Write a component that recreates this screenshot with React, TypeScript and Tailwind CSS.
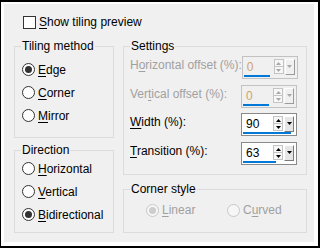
import { clsx as cn } from "clsx";

function Mn({ t, i }: { t: string; i: number }) {
  return (
    <>
      {t.slice(0, i)}
      <span className="underline decoration-1 underline-offset-[2px]">{t[i]}</span>
      {t.slice(i + 1)}
    </>
  );
}

function Radio({
  label,
  k,
  checked,
  disabled,
}: {
  label: string;
  k: number;
  checked?: boolean;
  disabled?: boolean;
}) {
  return (
    <div className="flex h-[23px] items-center gap-[3px]">
      <span
        className={cn(
          "flex size-[13px] shrink-0 items-center justify-center rounded-full border",
          disabled ? "border-[#c8c8c8] bg-[#f6f6f6]" : "border-[#333333] bg-white",
        )}
      >
        {checked && (
          <span
            className={cn(
              "size-[7px] rounded-full",
              disabled ? "bg-[#cdcdcd]" : "bg-[#333333]",
            )}
          />
        )}
      </span>
      <span className={disabled ? "text-[#a0a0a0]" : "text-black"}>
        <Mn t={label} i={k} />
      </span>
    </div>
  );
}

function Group({
  title,
  className,
  children,
}: {
  title: string;
  className?: string;
  children?: React.ReactNode;
}) {
  return (
    <div className={cn("relative border border-[#dcdcdc]", className)}>
      <span className="absolute -top-[9px] left-[6px] bg-[#f0f0f0] px-[1px] leading-[16px] text-black">
        {title}
      </span>
      {children}
    </div>
  );
}

function Tri({ up, color }: { up?: boolean; color: string }) {
  return (
    <svg width="5" height="3" viewBox="0 0 5 3">
      <path d={up ? "M0 3 L2.5 0 L5 3 Z" : "M0 0 L5 0 L2.5 3 Z"} fill={color} />
    </svg>
  );
}

function Spin({
  value,
  bar,
  disabled,
}: {
  value: string;
  bar: number;
  disabled?: boolean;
}) {
  const arrow = disabled ? "#a8a8a8" : "#000000";
  return (
    <div
      className={cn(
        "flex h-[23px] w-[56px] shrink-0 flex-col border pb-[1px] pl-[1px] pr-[2px] pt-[2px]",
        disabled ? "border-[#c2c2c2] bg-[#f0f0f0]" : "border-[#8a8a8a] bg-white",
      )}
    >
      <div className="flex h-[16px] gap-[1px]">
        <span
          className={cn(
            "flex-1 pl-[3px] pt-[1px] text-[12px] leading-[14px]",
            disabled ? "text-[#cfa467]" : "text-black",
          )}
        >
          {value}
        </span>
        <div className="flex h-[15px] w-[10px] flex-col">
          <div className="flex flex-1 items-center justify-center border border-[#c4c4c4] bg-[#f7f7f7]">
            <Tri up color={arrow} />
          </div>
          <div className="flex flex-1 items-center justify-center border border-t-0 border-[#c4c4c4] bg-[#f7f7f7]">
            <Tri color={arrow} />
          </div>
        </div>
        <div
          className={cn(
            "flex w-[10px] justify-center border border-l-white border-t-white pt-[5px]",
            disabled
              ? "border-b-[#9a9a9a] border-r-[#9a9a9a] bg-[#f0f0f0]"
              : "border-b-[#7a7a7a] border-r-[#7a7a7a] bg-[#e6e6e6]",
          )}
        >
          <Tri color={arrow} />
        </div>
      </div>
      <div className="h-[2px] bg-[#0078d7]" style={{ width: bar }} />
    </div>
  );
}

function Row({
  label,
  k,
  value,
  bar,
  disabled,
  className,
}: {
  label: string;
  k: number;
  value: string;
  bar: number;
  disabled?: boolean;
  className?: string;
}) {
  return (
    <div className={cn("flex h-[23px] items-start", className)}>
      <span
        className={cn(
          "flex-1 whitespace-nowrap pt-[1px] leading-[16px]",
          disabled ? "text-[#a0a0a0]" : "text-black",
        )}
      >
        <Mn t={label} i={k} />
      </span>
      <Spin value={value} bar={bar} disabled={disabled} />
    </div>
  );
}

export default function App() {
  return (
    <div className="h-[248px] w-[320px] border-b-2 border-l border-r-2 border-t-2 border-black bg-white pb-[4px] pl-[3px] pr-[4px] pt-[2px] font-['Liberation_Sans',Arial,sans-serif] text-[12px] leading-[16px] text-black">
      <div className="h-[238px] w-[310px] bg-[#f0f0f0]">
        <label className="ml-[19px] box-content flex h-[16px] items-center gap-[3px] pt-[10px]">
          <span className="size-[13px] border border-[#333333] bg-white" />
          <span>
            <Mn t="Show tiling preview" i={0} />
          </span>
        </label>

        <div className="ml-[10px] mt-[16px] flex gap-[9px]">
          <div className="flex w-[100px] flex-col">
            <Group title="Tiling method" className="h-[92px] pl-[7px] pt-[11px]">
              <Radio label="Edge" k={0} checked />
              <Radio label="Corner" k={0} />
              <Radio label="Mirror" k={0} />
            </Group>
            <Group title="Direction" className="mt-[12px] h-[83px] pl-[7px] pt-[6px]">
              <Radio label="Horizontal" k={0} />
              <Radio label="Vertical" k={0} />
              <Radio label="Bidirectional" k={0} checked />
            </Group>
          </div>

          <div className="flex w-[184px] flex-col">
            <Group title="Settings" className="h-[129px] pl-[6px] pr-[9px] pt-[9px]">
              <Row label="Horizontal offset (%):" k={1} value="0" bar={26} disabled />
              <Row label="Vertical offset (%):" k={3} value="0" bar={26} disabled className="mt-[6px]" />
              <Row label="Width (%):" k={0} value="90" bar={48} className="mt-[5px]" />
              <Row label="Transition (%):" k={0} value="63" bar={33} className="mt-[6px]" />
            </Group>
            <Group title="Corner style" className="mt-[14px] flex h-[44px] items-center pb-[2px] pl-[22px]">
              <div className="w-[81px]">
                <Radio label="Linear" k={0} checked disabled />
              </div>
              <Radio label="Curved" k={1} disabled />
            </Group>
          </div>
        </div>
      </div>
    </div>
  );
}
